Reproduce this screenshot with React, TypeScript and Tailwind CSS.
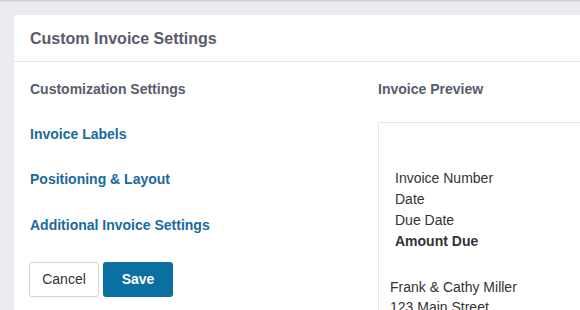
import React from "react";

export default function App() {
  return (
    <div
      className="w-[580px] h-[310px] overflow-hidden bg-[#ebecf0] relative"
      style={{ fontFamily: '"Liberation Sans", Arial, sans-serif' }}
    >
      <div className="h-[2px] bg-gradient-to-b from-[#c4c4c8] to-[#ebecf0]" />
      <div className="ml-[14px] mt-[13px] bg-white w-[600px] h-[320px] rounded-tl-[2px]">
        <div className="h-[47px] px-4 flex items-center border-b border-[#e9e9ec]">
          <h1 className="text-[16px] font-bold text-[#595b6c] leading-[18px] pt-[1px]">
            Custom Invoice Settings
          </h1>
        </div>
        <div className="flex">
          <div className="w-[364px] pl-4 pt-[19px] flex flex-col items-start">
            <h2 className="text-[14px] font-bold text-[#595b6c] leading-[16px]">
              Customization Settings
            </h2>
            <a className="mt-[29px] text-[14px] font-bold text-[#1a6a9c] leading-[16px]">
              Invoice Labels
            </a>
            <a className="mt-[29px] text-[14px] font-bold text-[#1a6a9c] leading-[16px]">
              Positioning &amp; Layout
            </a>
            <a className="mt-[30px] text-[14px] font-bold text-[#1a6a9c] leading-[16px]">
              Additional Invoice Settings
            </a>
            <div className="mt-[29px] -ml-px flex gap-[4px]">
              <button className="w-[70px] h-[35px] rounded-[3px] border border-[#d4d4d8] bg-white text-[14px] text-[#333]">
                Cancel
              </button>
              <button className="w-[70px] h-[35px] rounded-[3px] bg-[#0b6fa2] text-[14px] font-bold text-white">
                Save
              </button>
            </div>
          </div>
          <div className="flex-1 pt-[19px]">
            <h2 className="text-[14px] font-bold text-[#595b6c] leading-[16px]">
              Invoice Preview
            </h2>
            <div className="mt-[25px] border border-[#e6e6e8] h-[300px] pl-[11px] pt-[45px] text-[14px] text-[#333] leading-[21px]">
              <div className="pl-[5px]">
                <div>Invoice Number</div>
                <div>Date</div>
                <div>Due Date</div>
                <div className="font-bold">Amount Due</div>
              </div>
              <div className="mt-[25px] leading-[20px]">
                <div>Frank &amp; Cathy Miller</div>
                <div>123 Main Street</div>
              </div>
            </div>
          </div>
        </div>
      </div>
    </div>
  );
}
